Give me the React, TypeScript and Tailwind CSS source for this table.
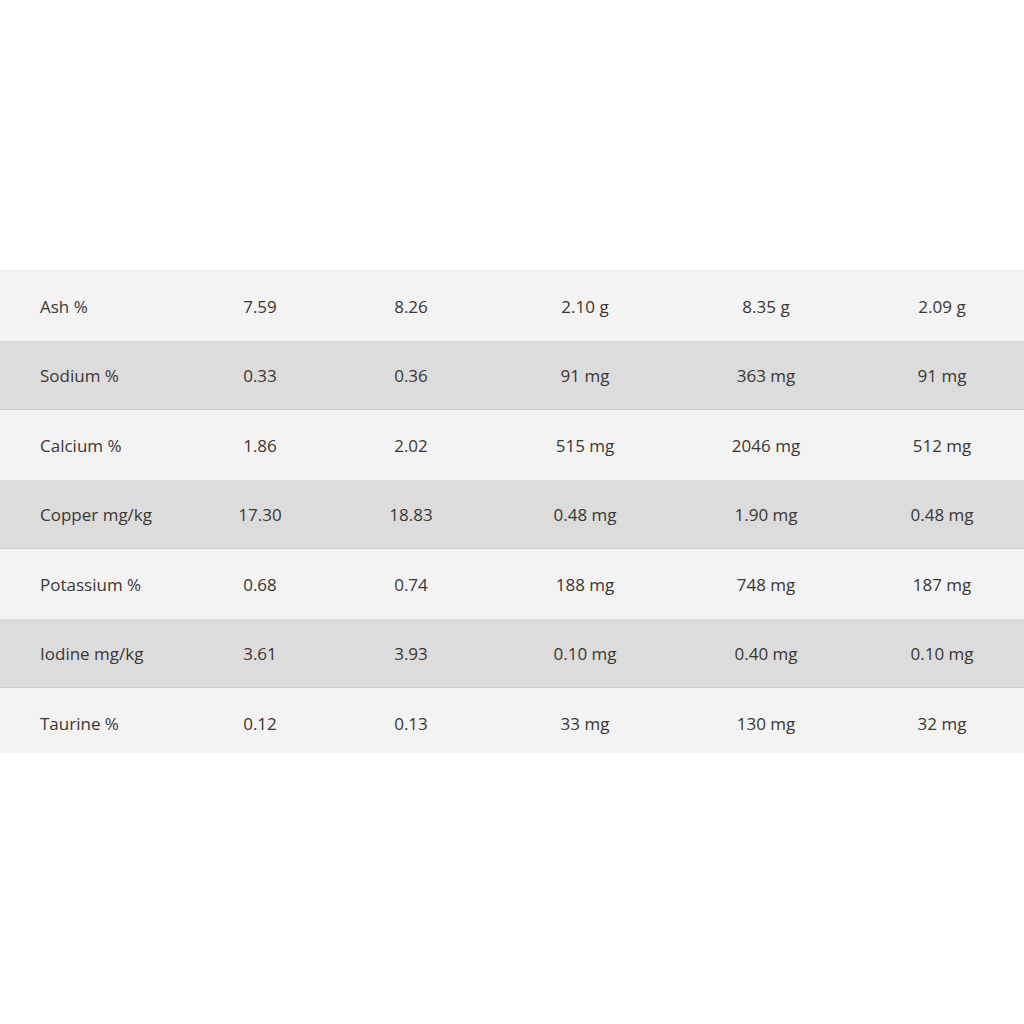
const rows: string[][] = [
  ["Ash %", "7.59", "8.26", "2.10 g", "8.35 g", "2.09 g"],
  ["Sodium %", "0.33", "0.36", "91 mg", "363 mg", "91 mg"],
  ["Calcium %", "1.86", "2.02", "515 mg", "2046 mg", "512 mg"],
  ["Copper mg/kg", "17.30", "18.83", "0.48 mg", "1.90 mg", "0.48 mg"],
  ["Potassium %", "0.68", "0.74", "188 mg", "748 mg", "187 mg"],
  ["Iodine mg/kg", "3.61", "3.93", "0.10 mg", "0.40 mg", "0.10 mg"],
  ["Taurine %", "0.12", "0.13", "33 mg", "130 mg", "32 mg"],
];

export default function App() {
  return (
    <div className="h-[1024px] w-[1024px] bg-white pt-[270px] font-['Open_Sans',sans-serif] text-[17px] text-[#3b3632]">
      <div className="border-t border-[#ebebeb]">
        {rows.map((row, i) => {
          const dark = i % 2 === 1;
          const last = i === rows.length - 1;
          return (
            <div
              key={row[0]}
              className={`grid grid-cols-[196px_128px_174px_174px_188px_164px] items-center ${
                last ? "h-[65px] pt-[7px]" : "h-[69.5px] pt-[1px]"
              } ${dark ? "bg-[#dcdcdc] border-b border-[#d0d0d0]" : "bg-[#f3f3f3]"}`}
            >
              <div className="pl-10">{row[0]}</div>
              {row.slice(1).map((cell, j) => (
                <div key={j} className="text-center">
                  {cell}
                </div>
              ))}
            </div>
          );
        })}
      </div>
    </div>
  );
}
